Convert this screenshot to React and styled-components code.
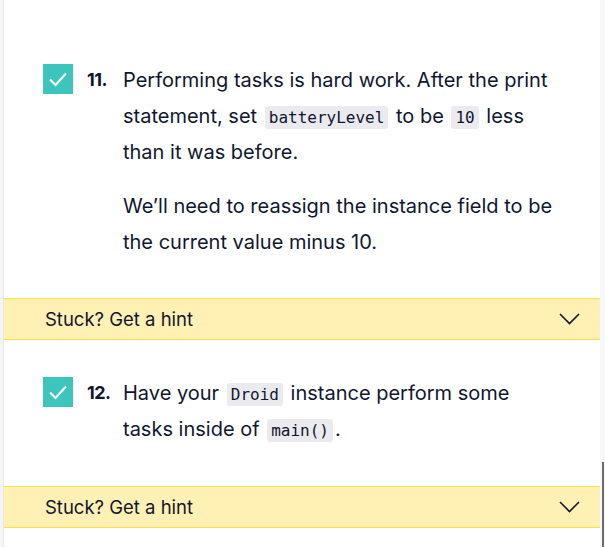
import React from 'react';
import styled, { createGlobalStyle } from 'styled-components';

const GlobalStyle = createGlobalStyle`
  html, body {
    margin: 0;
    padding: 0;
    background: #fff;
  }
  body {
    font-family: 'Inter', 'Liberation Sans', sans-serif;
    color: #10162f;
  }
`;

const Page = styled.div`
  display: flex;
  height: 547px;
  overflow: hidden;
`;

const Rail = styled.div`
  width: 3px;
  flex: none;
  background: #f5f5f5;
  border-right: 1px solid #e8e8e8;
`;

const Gutter = styled.div`
  position: relative;
  width: 5px;
  flex: none;
  background: #f8f8f8;
`;

const Thumb = styled.div`
  position: absolute;
  top: 462px;
  left: 2px;
  width: 2px;
  height: 90px;
  background: #6b6b6b;
`;

const Main = styled.div`
  flex: 1;
  padding-top: 62px;
`;

const Task = styled.div`
  display: grid;
  grid-template-columns: 30px 50px 1fr;
  padding: 0 38px 0 39px;
  margin-bottom: ${p => p.gap}px;
`;

const Check = styled.div`
  width: 30px;
  height: 30px;
  margin-top: 2px;
  background: #3bc5bd;
  display: flex;
  align-items: center;
  justify-content: center;
`;

const Num = styled.span`
  font-weight: 700;
  font-size: 18px;
  line-height: 36px;
  padding-left: 14px;
  letter-spacing: -0.5px;
`;

const Body = styled.div`
  font-size: 20px;
  line-height: 36px;

  p {
    margin: 0 0 18px;
  }
  p:last-child {
    margin-bottom: 0;
  }
`;

const Code = styled.code`
  font-family: 'DejaVu Sans Mono', monospace;
  font-size: 16px;
  line-height: 20px;
  background: #ebebef;
  border-radius: 3px;
  padding: 2px 4px;
  margin: 0 2px;
  color: #10162f;
`;

const Hint = styled.div`
  display: flex;
  align-items: center;
  justify-content: space-between;
  height: 40px;
  padding: 0 20px 0 41px;
  background: #fff0b3;
  border-top: 1px solid #ffe04a;
  border-bottom: 1px solid #ffe04a;
  font-size: 18.5px;
  margin-bottom: ${p => p.gap}px;
`;

const CheckIcon = () => (
  <svg width="20" height="16" viewBox="0 0 20 16">
    <path d="M2 8.5 L7.5 14 L18 2.5" fill="none" stroke="#fff" strokeWidth="2.2" />
  </svg>
);

const Chevron = () => (
  <svg width="21" height="12" viewBox="0 0 21 12">
    <path d="M1 1 L10.5 10.5 L20 1" fill="none" stroke="#10162f" strokeWidth="1.6" />
  </svg>
);

export default function App() {
  return (
    <>
      <GlobalStyle />
      <Page>
        <Rail />
        <Main>
          <Task gap={38}>
            <Check><CheckIcon /></Check>
            <Num>11.</Num>
            <Body>
              <p>
                Performing tasks is hard work. After the print statement, set{' '}
                <Code>batteryLevel</Code> to be <Code>10</Code> less than it was before.
              </p>
              <p>We’ll need to reassign the instance field to be the current value minus 10.</p>
            </Body>
          </Task>
          <Hint gap={35}>
            <span>Stuck? Get a hint</span>
            <Chevron />
          </Hint>
          <Task gap={39}>
            <Check><CheckIcon /></Check>
            <Num>12.</Num>
            <Body>
              <p>
                Have your <Code>Droid</Code> instance perform some tasks inside of{' '}
                <Code>main()</Code>.
              </p>
            </Body>
          </Task>
          <Hint gap={0}>
            <span>Stuck? Get a hint</span>
            <Chevron />
          </Hint>
        </Main>
        <Gutter><Thumb /></Gutter>
      </Page>
    </>
  );
}
